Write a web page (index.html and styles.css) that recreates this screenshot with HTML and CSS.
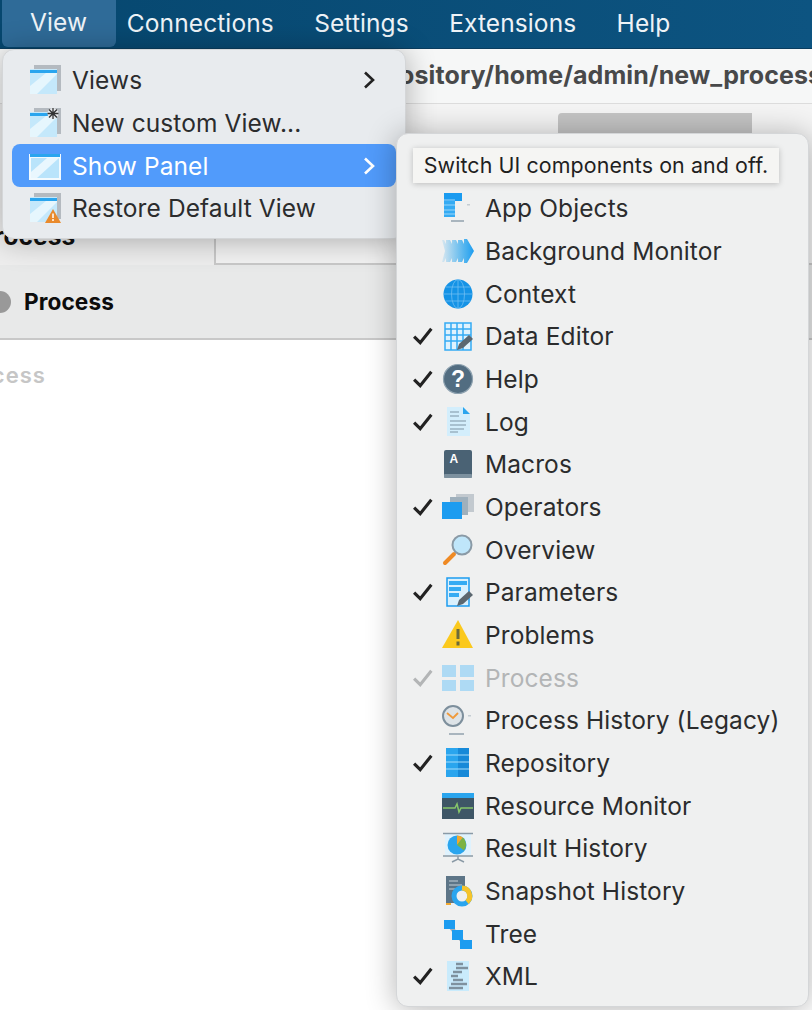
FILE: index.html
```html
<!DOCTYPE html>
<html lang="en">
<head>
  <meta charset="UTF-8">
  <title>View menu</title>
  <link rel="stylesheet" href="styles.css">
</head>
<body>

  <nav class="menubar">
    <span class="menubar-item active">View</span>
    <span class="menubar-item">Connections</span>
    <span class="menubar-item">Settings</span>
    <span class="menubar-item">Extensions</span>
    <span class="menubar-item">Help</span>
  </nav>

  <div class="pathbar">Repository/home/admin/new_process</div>

  <div class="workspace">
    <div class="panel-title">Process</div>
    <div class="panel-side">
      <div class="tabs"><span class="tab"></span></div>
      <div class="panel-box"></div>
    </div>
  </div>

  <div class="process-bar">
    <span class="process-dot"></span>
    <span>Process</span>
  </div>

  <div class="canvas">
    <span class="canvas-label">Process</span>
  </div>

  <!-- window icon used by the view menu -->
  <svg class="defs" width="0" height="0">
    <symbol id="win" viewBox="0 0 32 30">
      <rect x="5" y="0" width="27" height="26" fill="#b4bac0"/>
      <rect x="1" y="4" width="27" height="25" fill="#c4e8fb"/>
      <polygon points="1,29 1,21 17,8 28,8 28,9 8,29" fill="#e6f6fd"/>
      <rect x="1" y="5" width="27" height="3" fill="#2aa5ee"/>
    </symbol>
    <linearGradient id="fade">
      <stop offset="0" stop-color="#2aa5ee" stop-opacity=".12"/>
      <stop offset=".7" stop-color="#2aa5ee" stop-opacity=".8"/>
      <stop offset="1" stop-color="#1c9cf0"/>
    </linearGradient>
  </svg>

  <div class="menu view-menu">
    <div class="row">
      <svg class="win"><use href="#win"/></svg>
      <span class="label">Views</span>
      <svg class="arrow" viewBox="0 0 12 18"><path d="M2 1.5 10 9 2 16.5"/></svg>
    </div>
    <div class="row">
      <svg class="win" viewBox="0 0 32 30">
        <use href="#win" width="32" height="30"/>
        <circle cx="24" cy="5.500" r="5.500" fill="#e8ebee"/>
        <g stroke="#333" stroke-width="1.300"><path d="M24 0v11M18.500 5.500h11M20 1.500l8 8M28 1.500l-8 8"/></g>
      </svg>
      <span class="label">New custom View...</span>
    </div>
    <div class="row selected">
      <svg class="win" viewBox="0 0 32 30">
        <rect x="0" y="3" width="32" height="26" fill="#f2fafe"/>
        <rect x="2" y="7" width="28" height="20" fill="#b9e4fb"/>
        <polygon points="2,27 2,21 18,7 30,7 8,27" fill="#e9f7fe"/>
        <rect x="1" y="3" width="30" height="3" fill="#2aa5ee"/>
      </svg>
      <span class="label">Show Panel</span>
      <svg class="arrow" viewBox="0 0 12 18"><path d="M2 1.500 10 9 2 16.500"/></svg>
    </div>
    <div class="row">
      <svg class="win" viewBox="0 0 32 30">
        <use href="#win" width="32" height="30"/>
        <polygon points="24,16 32,30 16,30" fill="#e98a2c"/>
        <path d="M24 20.500v4.500M24 26v2" stroke="#fff" stroke-width="1.500"/>
      </svg>
      <span class="label">Restore Default View</span>
    </div>
  </div>

  <div class="menu panel-menu">
    <div class="hint">Switch UI components on and off.</div>

    <div class="row">
      <span class="check"></span>
      <svg class="icon" viewBox="0 0 32 32">
        <rect x="2" y="1" width="18" height="8" fill="#1a9bf0"/>
        <rect x="2" y="9" width="11" height="16" fill="#35abf3"/>
        <path d="M2 8h11M2 13h11M2 18h11M2 22h11" stroke="#9ad6fa" stroke-width="1"/>
        <rect x="25" y="12" width="3" height="1.500" fill="#c4ccd2"/>
        <rect x="9" y="28" width="13" height="2" fill="#a9b5be"/>
      </svg>
      <span class="label">App Objects</span>
    </div>

    <div class="row">
      <span class="check"></span>
      <svg class="icon" viewBox="0 0 32 32">
        <polygon fill="url(#fade)" points="0,5 2,5 4,9 4,5 8,5 10,9 10,5 14,5 16,9 16,5 20,5 22,9 22,4 25,4 32,16 25,28 22,28 22,23 20,27 16,27 16,23 14,27 10,27 10,23 8,27 4,27 4,23 2,27 0,27 3,16"/>
      </svg>
      <span class="label">Background Monitor</span>
    </div>

    <div class="row">
      <span class="check"></span>
      <svg class="icon" viewBox="0 0 32 32">
        <circle cx="16" cy="16" r="14.500" fill="#1593e6"/>
        <g fill="none" stroke="#6fbef2" stroke-width=".8">
          <ellipse cx="16" cy="16" rx="6.500" ry="14.500"/>
          <path d="M16 1.500v29M1.500 16h29M3.500 9h25M3.500 23h25"/>
        </g>
      </svg>
      <span class="label">Context</span>
    </div>

    <div class="row">
      <svg class="check-mark" viewBox="1 1 18 16"><path d="M2 9.500 7.500 15 17.500 2.500"/></svg>
      <svg class="icon" viewBox="0 0 32 32">
        <rect x="3" y="3" width="26" height="27" fill="#dff2fd" stroke="#35abf3" stroke-width="1.500"/>
        <path d="M9 3v27M15 3v27M21 3v27M3 9h26M3 15h26M3 21h26" stroke="#35abf3" stroke-width="1.500"/>
        <path d="M15 30 17 24 27 15 31 19 21 28Z" fill="#5b6770"/>
      </svg>
      <span class="label">Data Editor</span>
    </div>

    <div class="row">
      <svg class="check-mark" viewBox="1 1 18 16"><path d="M2 9.500 7.500 15 17.500 2.500"/></svg>
      <svg class="icon" viewBox="0 0 32 32">
        <circle cx="16" cy="16" r="14.500" fill="#526d81" stroke="#8ea2b0" stroke-width="1.200"/>
        <text class="icon-text" x="16" y="24" font-size="23">?</text>
      </svg>
      <span class="label">Help</span>
    </div>

    <div class="row">
      <svg class="check-mark" viewBox="1 1 18 16"><path d="M2 9.500 7.500 15 17.500 2.500"/></svg>
      <svg class="icon" viewBox="0 0 32 32">
        <polygon points="5,1 21,1 28,8 28,30 5,30" fill="#d3eefc"/>
        <polygon points="21,1 28,8 21,8" fill="#2aa5ee"/>
        <path d="M8 6h9M8 10h9M8 15h16M8 19h16M8 23h14M8 26h8" stroke="#7f94a3" stroke-width="1.200"/>
      </svg>
      <span class="label">Log</span>
    </div>

    <div class="row">
      <span class="check"></span>
      <svg class="icon" viewBox="0 0 32 32">
        <rect x="2" y="2" width="28" height="28" rx="2" fill="#4a6274"/>
        <rect x="2" y="26" width="28" height="4" rx="1" fill="#7c909e"/>
        <text class="icon-text" x="12" y="15" font-size="12">A</text>
      </svg>
      <span class="label">Macros</span>
    </div>

    <div class="row">
      <svg class="check-mark" viewBox="1 1 18 16"><path d="M2 9.500 7.500 15 17.500 2.500"/></svg>
      <svg class="icon" viewBox="0 0 32 32">
        <rect x="14" y="3" width="18" height="18" fill="#c2c9cf"/>
        <rect x="8" y="6" width="18" height="18" fill="#9fb0bc"/>
        <rect x="0" y="11" width="20" height="17" fill="#1c9cf0"/>
      </svg>
      <span class="label">Operators</span>
    </div>

    <div class="row">
      <span class="check"></span>
      <svg class="icon" viewBox="0 0 32 32">
        <path d="M12 20 3 29" stroke="#ef8a24" stroke-width="4" stroke-linecap="round"/>
        <circle cx="20" cy="11" r="9.500" fill="#bfe6fa" stroke="#8a9aa6" stroke-width="2"/>
      </svg>
      <span class="label">Overview</span>
    </div>

    <div class="row">
      <svg class="check-mark" viewBox="1 1 18 16"><path d="M2 9.500 7.500 15 17.500 2.500"/></svg>
      <svg class="icon" viewBox="0 0 32 32">
        <rect x="5" y="2" width="22" height="28" fill="#d9f0fd" stroke="#1c9cf0" stroke-width="1.500"/>
        <rect x="7" y="5" width="18" height="4" fill="#35abf3"/>
        <rect x="7" y="11" width="12" height="4" fill="#35abf3"/>
        <rect x="7" y="17" width="10" height="4" fill="#35abf3"/>
        <path d="M15 30 17 24 27 15 31 19 21 28Z" fill="#5b6770"/>
      </svg>
      <span class="label">Parameters</span>
    </div>

    <div class="row">
      <span class="check"></span>
      <svg class="icon" viewBox="0 0 32 32">
        <polygon points="16,1 31,29 0,29" fill="#fbc91d"/>
        <path d="M16 10v10M16 22.500v4" stroke="#6d6a3a" stroke-width="3"/>
      </svg>
      <span class="label">Problems</span>
    </div>

    <div class="row disabled">
      <svg class="check-mark" viewBox="1 1 18 16"><path d="M2 9.500 7.500 15 17.500 2.500"/></svg>
      <svg class="icon" viewBox="0 0 32 32">
        <g fill="#aedaf4">
          <rect x="0" y="3" width="14" height="12"/>
          <rect x="18" y="3" width="14" height="12"/>
          <rect x="0" y="18" width="14" height="11"/>
          <rect x="18" y="18" width="14" height="11"/>
        </g>
      </svg>
      <span class="label">Process</span>
    </div>

    <div class="row">
      <span class="check"></span>
      <svg class="icon" viewBox="0 0 32 32">
        <circle cx="11" cy="12" r="10" fill="#dde3e7" stroke="#7d8f9c" stroke-width="2"/>
        <path d="M5 9 11 14 16 9" fill="none" stroke="#ef9a3c" stroke-width="1.800"/>
        <rect x="26" y="11" width="3" height="1.500" fill="#c4ccd2"/>
        <rect x="7" y="29" width="15" height="2" fill="#a9b5be"/>
      </svg>
      <span class="label">Process History (Legacy)</span>
    </div>

    <div class="row">
      <svg class="check-mark" viewBox="1 1 18 16"><path d="M2 9.500 7.500 15 17.500 2.500"/></svg>
      <svg class="icon" viewBox="0 0 32 32">
        <rect x="4" y="1" width="23" height="29" fill="#2aa5ee"/>
        <rect x="16" y="1" width="11" height="29" fill="#1789d8"/>
        <path d="M4 8h23M4 15h23M4 22h23" stroke="#a5dcfa" stroke-width="1"/>
      </svg>
      <span class="label">Repository</span>
    </div>

    <div class="row">
      <span class="check"></span>
      <svg class="icon" viewBox="0 0 32 32">
        <rect x="0" y="3" width="32" height="26" fill="#3e5666"/>
        <rect x="0" y="3" width="32" height="5" fill="#2aa5ee"/>
        <path d="M1 18h12l2-4 2 8 2-4h12" fill="none" stroke="#86c66a" stroke-width="1.500"/>
      </svg>
      <span class="label">Resource Monitor</span>
    </div>

    <div class="row">
      <span class="check"></span>
      <svg class="icon" viewBox="0 0 32 32">
        <rect x="3" y="2" width="26" height="21" fill="#dff2fd"/>
        <path d="M1 1.500h30M1 24h30M16 24v4M10 30l6-3 6 3" fill="none" stroke="#8a9aa6" stroke-width="1.500"/>
        <circle cx="15" cy="13" r="9.500" fill="#2aa5ee"/>
        <path d="M15 13V3.500a9.500 9.500 0 0 1 6 2Z" fill="#f2a82e"/>
        <path d="M15 13 21 5.500a9.500 9.500 0 0 1 1 13Z" fill="#7cb342"/>
      </svg>
      <span class="label">Result History</span>
    </div>

    <div class="row">
      <span class="check"></span>
      <svg class="icon" viewBox="0 0 32 32">
        <rect x="4" y="1" width="19" height="27" fill="#5d7587"/>
        <path d="M7 6h9M7 10h13M7 14h8" stroke="#c4d0d8" stroke-width="1.200"/>
        <circle cx="20" cy="21" r="8" fill="#eff0f0" stroke="#2aa5ee" stroke-width="5"/>
        <path d="M20 13a8 8 0 0 1 5 14" fill="none" stroke="#f6c42a" stroke-width="5"/>
        <rect x="4" y="28" width="5" height="2" fill="#f2a82e"/>
      </svg>
      <span class="label">Snapshot History</span>
    </div>

    <div class="row">
      <span class="check"></span>
      <svg class="icon" viewBox="0 0 32 32">
        <path d="M8 8 15 17 24 27" fill="none" stroke="#a3afb8" stroke-width="4"/>
        <rect x="2" y="2" width="11" height="9" fill="#1c9cf0"/>
        <rect x="10" y="12" width="11" height="10" fill="#1c9cf0"/>
        <rect x="18" y="22" width="12" height="9" fill="#1c9cf0"/>
      </svg>
      <span class="label">Tree</span>
    </div>

    <div class="row">
      <svg class="check-mark" viewBox="1 1 18 16"><path d="M2 9.500 7.500 15 17.500 2.500"/></svg>
      <svg class="icon" viewBox="0 0 32 32">
        <rect x="5" y="1" width="22" height="30" fill="#c9ebfc"/>
        <path d="M14 4h7M14 8h12M11 12h9M9 16h7M11 20h10M9 24h16M7 28h14" stroke="#7f919e" stroke-width="2.500"/>
      </svg>
      <span class="label">XML</span>
    </div>
  </div>

</body>
</html>
```

FILE: styles.css
```css
html, body {
  margin: 0;
  height: 1010px;
  overflow: hidden;
}
body {
  position: relative;
  font-family: Inter, "Liberation Sans", sans-serif;
  font-size: 24.5px;
  letter-spacing: 0.1px;
  color: #2b2c2d;
  background-color: #fff;
}
.defs {
  display: block;
}

/* top bar */
.menubar {
  display: flex;
  height: 48px;
  background: linear-gradient(90deg, #06476f, #0d5481);
  border-bottom: 1px solid #0a3d5f;
  color: #eef3f7;
}
.menubar-item {
  display: flex;
  align-items: center;
  padding: 0 20.2px 3px;
}
.menubar-item.active {
  padding: 0 29px 3px 28px;
  margin: 0 -9.5px 1px 2px;
  background-color: #2f6b98;
  border-radius: 0 0 6px 6px;
}

.pathbar {
  height: 54px;
  padding-left: 352px;
  line-height: 52px;
  font-size: 25px;
  font-weight: 700;
  white-space: nowrap;
  overflow: hidden;
  color: #48494a;
  background-color: #f6f7f7;
  border-bottom: 1px solid #dcdcdc;
}

/* panels behind the menus */
.workspace {
  display: grid;
  grid-template-columns: 214px 1fr;
  height: 161px;
  background-color: #eeeeee;
}
.panel-title {
  align-self: end;
  margin: 0 0 14px -22px;
  font-weight: 700;
  color: #111;
}
.tabs {
  display: flex;
  height: 30px;
  padding: 9px 0 0 344px;
  box-sizing: border-box;
  background-color: #f4f4f4;
}
.tab {
  width: 194px;
  background-color: #c4c4c4;
  border-radius: 4px 0 0 0;
}
.panel-box {
  height: 131px;
  background-color: #f3f3f3;
  border-left: 2px solid #c9c9c9;
  border-bottom: 2px solid #c9c9c9;
  box-sizing: border-box;
}
.process-bar {
  display: flex;
  align-items: center;
  gap: 13px;
  height: 73px;
  margin-left: -11px;
  font-size: 22.6px;
  font-weight: 700;
  color: #0c0c0c;
  background-color: #e8e9e9;
  border-bottom: 2px solid #c8c8c8;
}
.process-dot {
  width: 22px;
  height: 22px;
  border-radius: 50%;
  background-color: #999;
}
.canvas {
  padding: 22px 0 0 0;
}
.canvas-label {
  display: block;
  margin-left: -47px;
  font-weight: 600;
  font-size: 22px;
  letter-spacing: 1px;
  color: #c6c6c6;
}

/* menus */
.menu {
  position: absolute;
  box-sizing: border-box;
  border-radius: 12px;
  box-shadow: 0 2px 30px rgba(0,0,0,0.3);
  border: 1px solid #d4d6d8;
}
.view-menu {
  left: 2px;
  top: 49px;
  width: 404px;
  height: 190px;
  padding: 9px 9px 0;
  background-color: #e8ebee;
}
.panel-menu {
  left: 396px;
  top: 133px;
  width: 413px;
  height: 874px;
  padding: 14px 0 0;
  background-color: #eff0f0;
}
.row {
  display: flex;
  align-items: center;
  height: 42.68px;
}
.view-menu .row {
  padding-left: 17px;
  padding-right: 21px;
  border-radius: 8px;
}
.panel-menu .row {
  padding-left: 16px;
}
.row.selected {
  background-color: #519bfb;
  color: #fff;
}
.row.selected .arrow path {
  stroke: #fff;
}
.row.disabled {
  color: #b3b5b6;
}
.row.disabled .check-mark path {
  stroke: #b3b5b6;
}
.win {
  width: 32px;
  height: 30px;
  flex: none;
  margin-right: 11px;
}
.label {
  flex: 1;
  white-space: nowrap;
}
.arrow {
  width: 12px;
  height: 18px;
  flex: none;
}
.arrow path {
  fill: none;
  stroke: #222;
  stroke-width: 2.6;
}
.check-mark path {
  fill: none;
  stroke: #222;
  stroke-width: 2.8;
}
.check, .check-mark {
  width: 20px;
  height: 18px;
  flex: none;
  margin-right: 9px;
}
.icon {
  width: 32px;
  height: 32px;
  flex: none;
  margin-right: 11px;
}
.icon-text {
  font-family: "Liberation Sans", sans-serif;
  font-weight: 700;
  fill: #fff;
  text-anchor: middle;
}
.hint {
  width: 366px;
  height: 35px;
  margin: 0 0 4px 16px;
  box-sizing: border-box;
  line-height: 35px;
  text-align: center;
  font-size: 21.4px;
  color: #1f1f1f;
  background-color: #f5f5f3;
  box-shadow: 0 1px 6px rgba(0,0,0,0.22);
}
```
